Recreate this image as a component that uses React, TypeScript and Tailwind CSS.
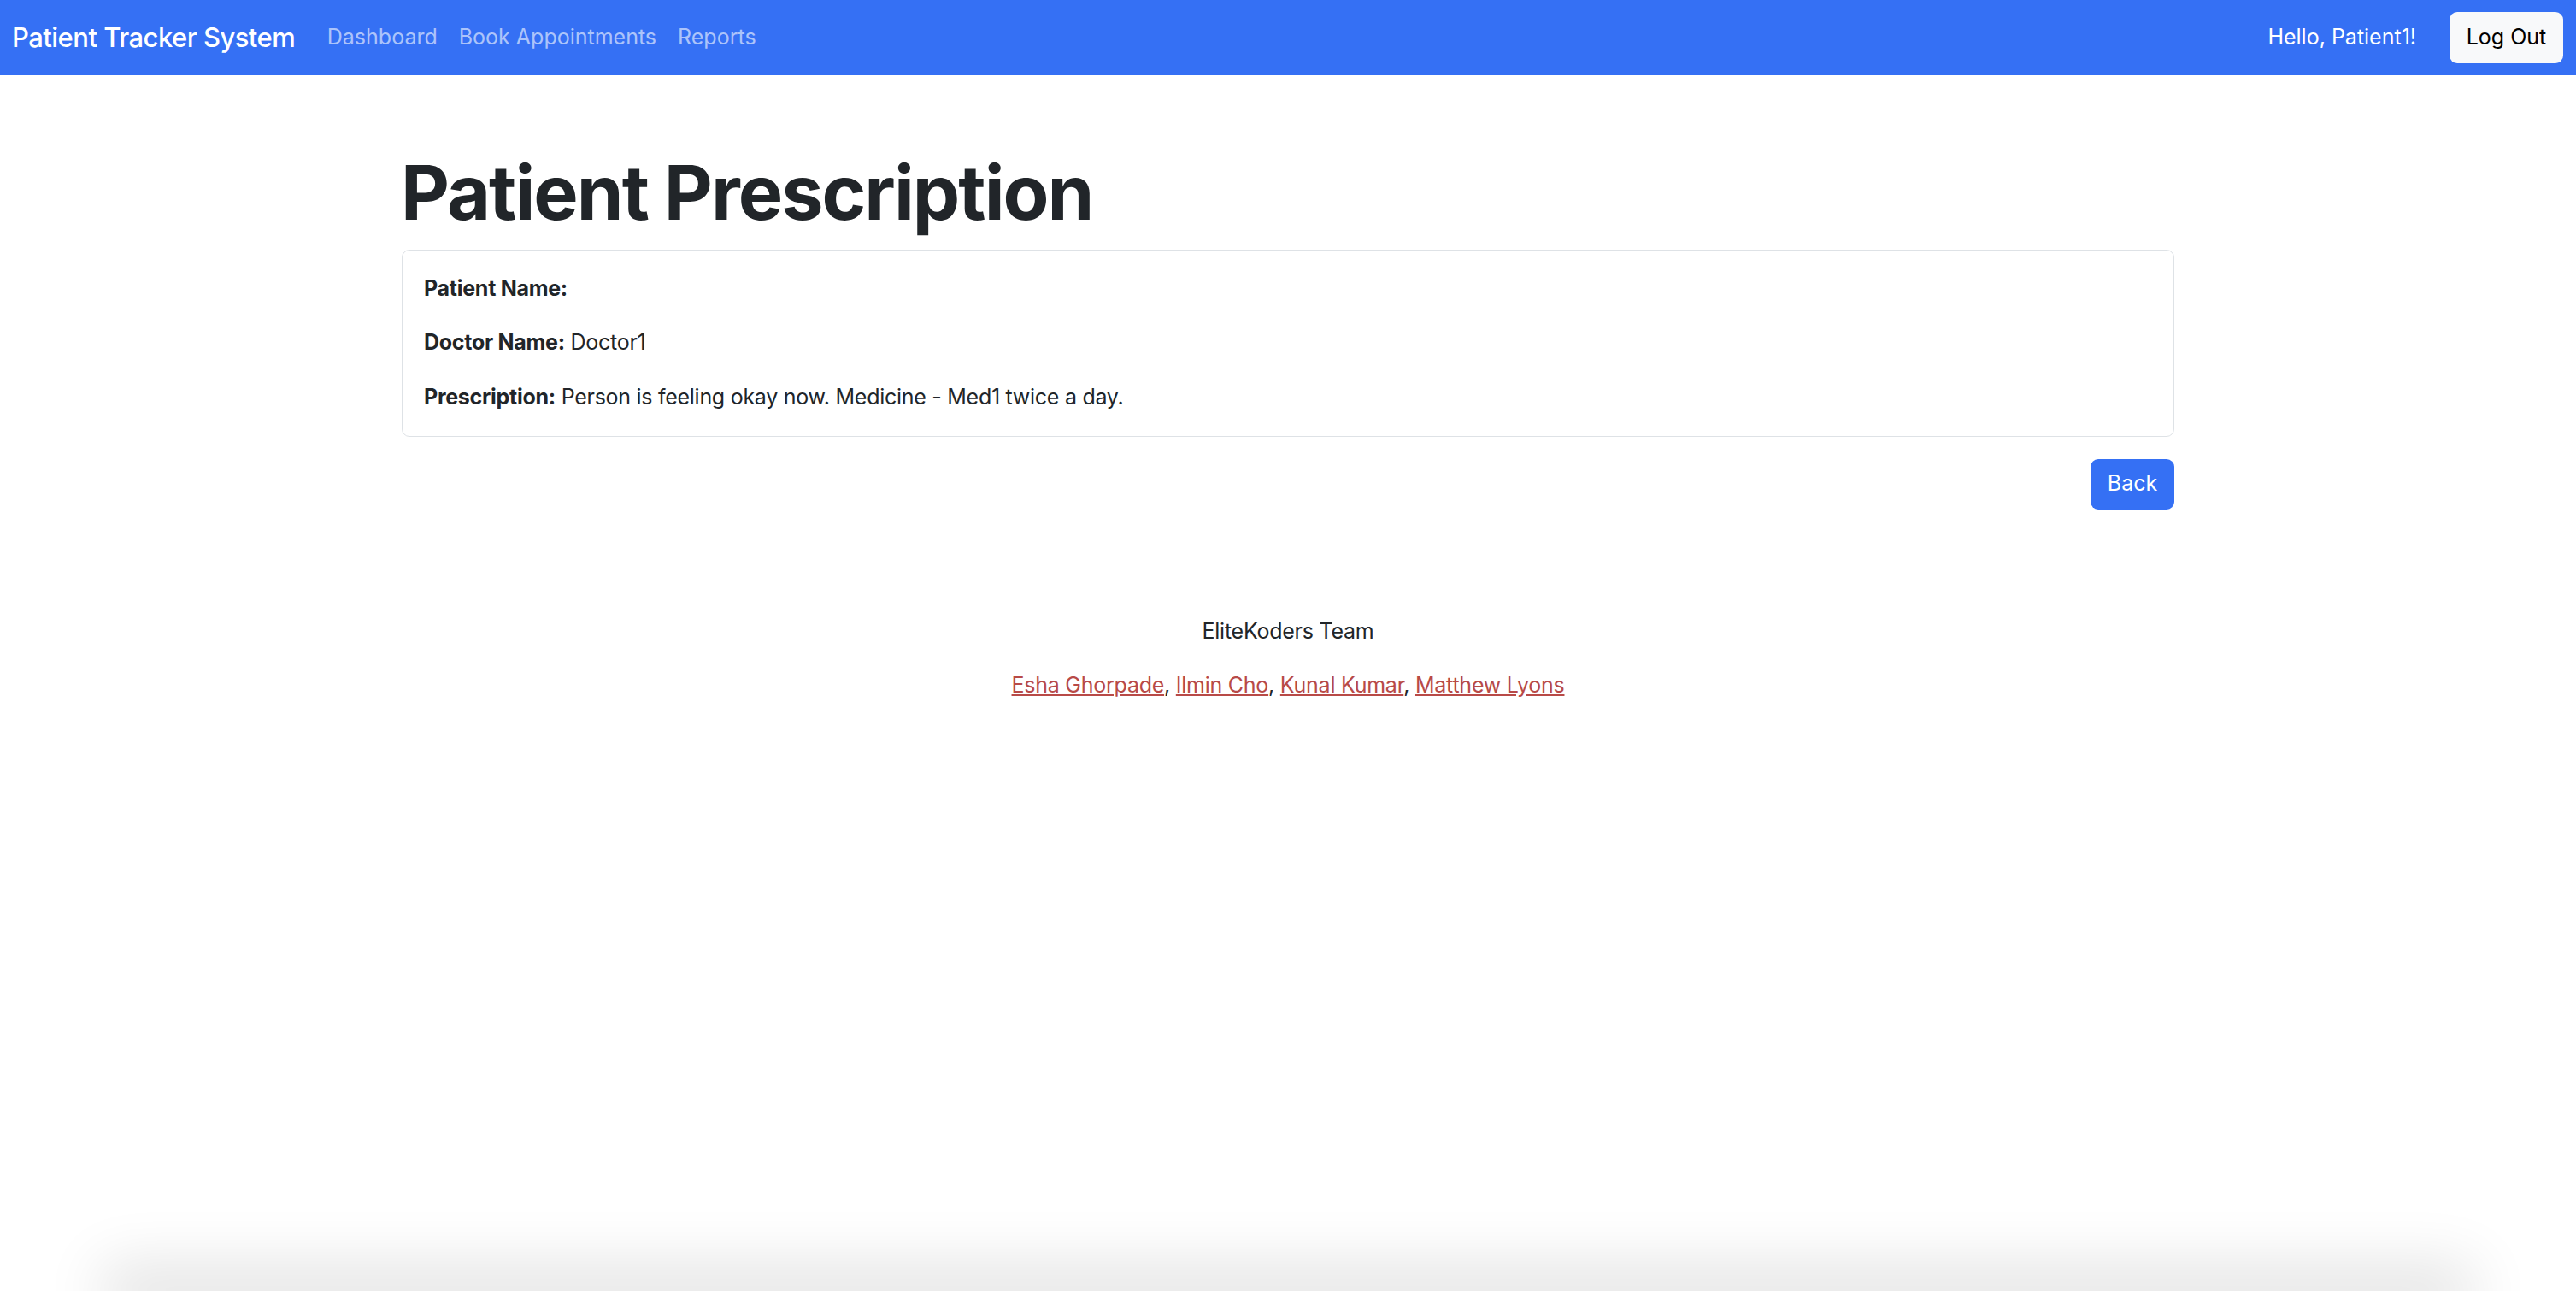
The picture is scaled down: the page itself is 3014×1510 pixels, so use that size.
import React from "react";

const font = { fontFamily: "Inter, 'Noto Sans', 'Liberation Sans', sans-serif" };

export default function App() {
  return (
    <div className="h-[1510px] flex flex-col overflow-hidden bg-white text-[#212529]" style={font}>
      <nav className="flex items-center h-[88px] shrink-0 bg-[#3570f4] pl-[14px] pr-[15px]">
        <span className="text-[31px] font-medium text-white mr-[25px] leading-[1.5] tracking-[-0.017em]">Patient Tracker System</span>
        <a className="px-[12.5px] text-[25px] text-white/60 leading-[1.5]">Dashboard</a>
        <a className="px-[12.5px] text-[25px] text-white/60 leading-[1.5]">Book Appointments</a>
        <a className="px-[12.5px] text-[25px] text-white/60 leading-[1.5]">Reports</a>
        <span className="ml-auto mr-[39px] text-[25px] text-white">Hello, Patient1!</span>
        <button className="h-[60px] w-[133px] rounded-[9px] bg-[#f8f9fa] text-black text-[25px]">Log Out</button>
      </nav>

      <main className="w-[2074px] mx-auto pt-[85px]">
        <h1 className="text-[88px] font-bold leading-[1.2] mb-[13px] -ml-[1px] tracking-[-0.022em]">Patient Prescription</h1>
        <div className="border border-[#dee2e6] rounded-[9px] px-[25px] pt-[25px] pb-[27px] text-[25px] leading-[38px] tracking-[-0.011em]">
          <p className="mb-[25.5px]"><b className="font-bold">Patient Name:</b> </p>
          <p className="mb-[25.5px]"><b className="font-bold">Doctor Name:</b> Doctor1</p>
          <p className="mb-0"><b className="font-bold">Prescription:</b> Person is feeling okay now. Medicine - Med1 twice a day.</p>
        </div>
        <div className="flex justify-end mt-[26px]">
          <button className="h-[59px] w-[98px] rounded-[9px] bg-[#3570f4] text-white text-[25px]">Back</button>
        </div>
      </main>

      <footer className="text-center text-[25px] leading-[38px] mt-[123px] tracking-[-0.01em]">
        <p className="mb-[25.5px]">EliteKoders Team</p>
        <p>
          <a className="text-[#b84a47] underline">Esha Ghorpade</a>,{" "}
          <a className="text-[#b84a47] underline">Ilmin Cho</a>,{" "}
          <a className="text-[#b84a47] underline">Kunal Kumar</a>,{" "}
          <a className="text-[#b84a47] underline">Matthew Lyons</a>
        </p>
      </footer>

      <div className="mt-auto h-0 mx-[150px] shrink-0 shadow-[0_0_70px_30px_rgba(0,0,0,0.12)]" />
    </div>
  );
}
